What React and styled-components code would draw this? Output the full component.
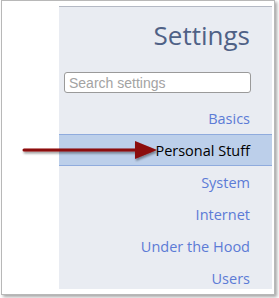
import React from 'react';
import styled, { createGlobalStyle } from 'styled-components';

const GlobalStyle = createGlobalStyle`
  html, body {
    margin: 0;
    padding: 0;
    background: #ffffff;
  }
`;

const Page = styled.div`
  width: 279px;
  height: 298px;
  padding: 0 4px 3px 1px;
  box-sizing: border-box;
`;

const Card = styled.div`
  position: relative;
  height: 100%;
  background: #ffffff;
  border: 1px solid #b8b8b8;
  box-shadow: 2px 2px 3px rgba(0, 0, 0, 0.35);
  padding: 5px 2px 5px 57px;
  box-sizing: border-box;
`;

const Sidebar = styled.nav`
  height: 100%;
  overflow: hidden;
  background: #e9ecf2;
  border-top: 1px solid #b4b9c4;
  box-sizing: border-box;
  display: flex;
  flex-direction: column;
  font-family: "Open Sans", "DejaVu Sans", sans-serif;
`;

const Title = styled.h1`
  flex-shrink: 0;
  margin: 0;
  padding: 8px 22px 0 0;
  text-align: right;
  font-size: 26px;
  font-weight: 400;
  line-height: 40px;
  color: #4f6186;
`;

const SearchBox = styled.input`
  flex-shrink: 0;
  margin: 17px 21px 9px 5px;
  height: 21px;
  box-sizing: border-box;
  border: 1px solid #9a9a9a;
  border-radius: 3px;
  padding: 0 4px;
  font-family: "Liberation Sans", Arial, sans-serif;
  font-size: 14px;
  background: #ffffff;
  outline: none;

  &::placeholder {
    color: #a3a3a3;
  }
`;

const Item = styled.div`
  flex-shrink: 0;
  height: 32px;
  box-sizing: border-box;
  display: flex;
  align-items: center;
  justify-content: flex-end;
  padding-right: 22px;
  font-size: 14.5px;
  color: ${(p) => (p.$active ? '#000000' : '#5c7bd6')};
  background: ${(p) => (p.$active ? '#bccfea' : 'transparent')};
  border-top: 1px solid ${(p) => (p.$active ? '#8fabdd' : 'transparent')};
  border-bottom: 1px solid ${(p) => (p.$active ? '#8fabdd' : 'transparent')};
`;

const Arrow = styled.svg`
  position: absolute;
  left: 18px;
  top: 138px;
  overflow: visible;
`;

const items = ['Basics', 'Personal Stuff', 'System', 'Internet', 'Under the Hood', 'Users'];

const App = () => {
  return (
    <Page>
      <GlobalStyle />
      <Card>
        <Sidebar>
          <Title>Settings</Title>
          <SearchBox placeholder="Search settings" />
          {items.map((label) => (
            <Item key={label} $active={label === 'Personal Stuff'}>
              {label}
            </Item>
          ))}
        </Sidebar>
        <Arrow width="140" height="26" viewBox="0 0 140 26">
          <defs>
            <filter id="sh" x="-10%" y="-50%" width="120%" height="200%">
              <feDropShadow dx="1" dy="2" stdDeviation="1.2" floodColor="#000" floodOpacity="0.4" />
            </filter>
          </defs>
          <g filter="url(#sh)">
            <line x1="4" y1="11" x2="118" y2="11" stroke="#8c0a0a" strokeWidth="3" strokeLinecap="round" />
            <polygon points="115,2 137,11 115,20" fill="#8c0a0a" />
          </g>
        </Arrow>
      </Card>
    </Page>
  );
};

export default App;
